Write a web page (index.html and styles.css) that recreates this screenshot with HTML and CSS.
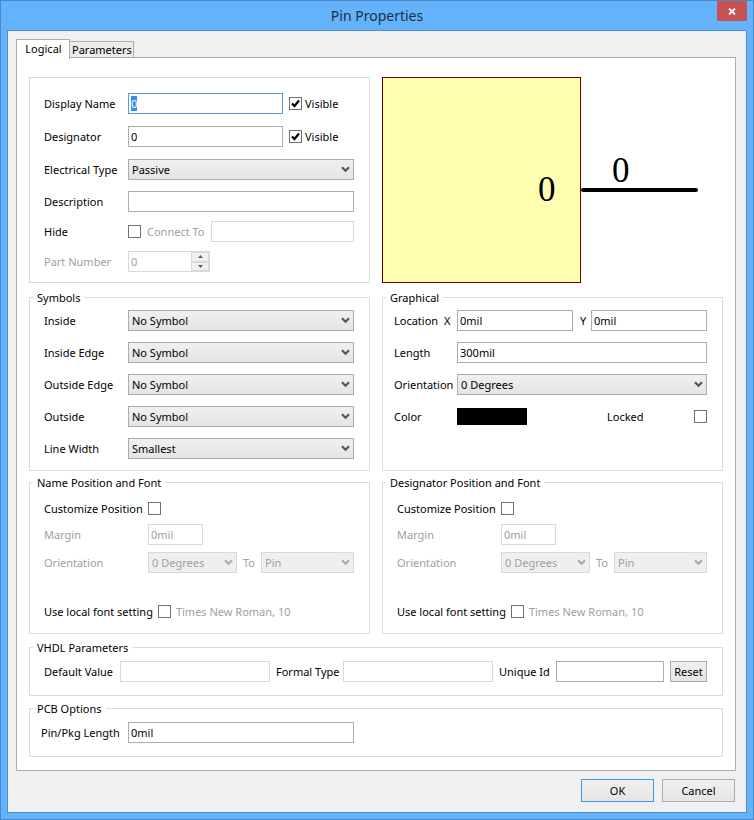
FILE: index.html
```html
<!DOCTYPE html>
<html lang="en">
<head>
    <meta charset="UTF-8">
    <meta name="viewport" content="width=device-width, initial-scale=1.0">
    <title>Pin Properties</title>
    <link rel="stylesheet" href="styles.css">
</head>
<body>
    <div class="window">
        <header class="titlebar">
            <h1>Pin Properties</h1>
            <button type="button" class="close" aria-label="Close">
                <svg width="8" height="7" viewBox="0 0 8 7"><path d="M1 0.5 L7 6.5 M7 0.5 L1 6.5" stroke="#fff" stroke-width="1.8"/></svg>
            </button>
        </header>

        <form class="client">
            <div class="tabs">
                <button type="button" class="tab active">Logical</button>
                <button type="button" class="tab">Parameters</button>
            </div>

            <div class="page">
                <div class="columns">
                    <div class="group main">
                        <div class="row loose">
                            <label class="name" for="displayName">Display Name</label>
                            <input type="text" class="current" id="displayName" value="0">
                            <label class="visible"><input type="checkbox" checked> Visible</label>
                        </div>
                        <div class="row loose">
                            <label class="name" for="designator">Designator</label>
                            <input type="text" id="designator" value="0">
                            <label class="visible"><input type="checkbox" checked> Visible</label>
                        </div>
                        <div class="row">
                            <label class="name" for="electricalType">Electrical Type</label>
                            <select id="electricalType"><option>Passive</option></select>
                        </div>
                        <div class="row tight">
                            <label class="name" for="description">Description</label>
                            <input type="text" id="description">
                        </div>
                        <div class="row tight">
                            <label class="name" for="hide">Hide</label>
                            <input type="checkbox" id="hide">
                            <label class="connect disabled" for="connectTo">Connect To</label>
                            <input type="text" id="connectTo" disabled>
                        </div>
                        <div class="row">
                            <label class="name disabled" for="partNumber">Part Number</label>
                            <div class="spinner">
                                <input type="text" id="partNumber" value="0" disabled>
                                <div class="arrows">
                                    <button type="button" aria-label="Up" disabled><svg width="5" height="3" viewBox="0 0 5 3"><path d="M0 3 L2.5 0 L5 3 Z"/></svg></button>
                                    <button type="button" aria-label="Down" disabled><svg width="5" height="3" viewBox="0 0 5 3"><path d="M0 0 L2.5 3 L5 0 Z"/></svg></button>
                                </div>
                            </div>
                        </div>
                    </div>

                    <!-- Pin preview -->
                    <svg class="preview" viewBox="0 0 341 206">
                        <rect x="0.5" y="0.5" width="198" height="205" fill="#ffffb0" stroke="#700000"/>
                        <path d="M201 113 H314" stroke="#000" stroke-width="4" stroke-linecap="round"/>
                        <text x="156" y="124">0</text>
                        <text x="230" y="105">0</text>
                    </svg>
                </div>

                <div class="columns">
                    <fieldset>
                        <legend>Symbols</legend>
                        <div class="row">
                            <label class="name" for="inside">Inside</label>
                            <select id="inside"><option>No Symbol</option></select>
                        </div>
                        <div class="row">
                            <label class="name" for="insideEdge">Inside Edge</label>
                            <select id="insideEdge"><option>No Symbol</option></select>
                        </div>
                        <div class="row">
                            <label class="name" for="outsideEdge">Outside Edge</label>
                            <select id="outsideEdge"><option>No Symbol</option></select>
                        </div>
                        <div class="row">
                            <label class="name" for="outside">Outside</label>
                            <select id="outside"><option>No Symbol</option></select>
                        </div>
                        <div class="row">
                            <label class="name" for="lineWidth">Line Width</label>
                            <select id="lineWidth"><option>Smallest</option></select>
                        </div>
                    </fieldset>

                    <fieldset class="graphical">
                        <legend>Graphical</legend>
                        <div class="row">
                            <span class="location">Location</span>
                            <label class="axis" for="locationX">X</label>
                            <input type="text" id="locationX" value="0mil">
                            <label class="axis y" for="locationY">Y</label>
                            <input type="text" id="locationY" value="0mil">
                        </div>
                        <div class="row">
                            <label class="name" for="length">Length</label>
                            <input type="text" id="length" value="300mil">
                        </div>
                        <div class="row">
                            <label class="name" for="orientation">Orientation</label>
                            <select id="orientation"><option>0 Degrees</option></select>
                        </div>
                        <div class="row">
                            <span class="name">Color</span>
                            <button type="button" class="color" aria-label="Color"></button>
                            <label class="locked">Locked <input type="checkbox"></label>
                        </div>
                    </fieldset>
                </div>

                <div class="columns fonts">
                    <fieldset>
                        <legend>Name Position and Font</legend>
                        <div class="row tight">
                            <label class="name" for="nameCustom">Customize Position</label>
                            <input type="checkbox" id="nameCustom">
                        </div>
                        <div class="row">
                            <label class="name disabled" for="nameMargin">Margin</label>
                            <input type="text" class="margin" id="nameMargin" value="0mil" disabled>
                        </div>
                        <div class="row orient">
                            <label class="name disabled" for="nameOrientation">Orientation</label>
                            <select id="nameOrientation" disabled><option>0 Degrees</option></select>
                            <label class="to disabled" for="nameTo">To</label>
                            <select id="nameTo" disabled><option>Pin</option></select>
                        </div>
                        <div class="row local">
                            <label for="nameFont">Use local font setting</label>
                            <input type="checkbox" id="nameFont">
                            <span class="disabled">Times New Roman, 10</span>
                        </div>
                    </fieldset>

                    <fieldset>
                        <legend>Designator Position and Font</legend>
                        <div class="row tight">
                            <label class="name" for="desCustom">Customize Position</label>
                            <input type="checkbox" id="desCustom">
                        </div>
                        <div class="row">
                            <label class="name disabled" for="desMargin">Margin</label>
                            <input type="text" class="margin" id="desMargin" value="0mil" disabled>
                        </div>
                        <div class="row orient">
                            <label class="name disabled" for="desOrientation">Orientation</label>
                            <select id="desOrientation" disabled><option>0 Degrees</option></select>
                            <label class="to disabled" for="desTo">To</label>
                            <select id="desTo" disabled><option>Pin</option></select>
                        </div>
                        <div class="row local">
                            <label for="desFont">Use local font setting</label>
                            <input type="checkbox" id="desFont">
                            <span class="disabled">Times New Roman, 10</span>
                        </div>
                    </fieldset>
                </div>

                <fieldset class="wide">
                    <legend>VHDL Parameters</legend>
                    <div class="vhdl">
                        <label for="defaultValue">Default Value</label>
                        <input type="text" id="defaultValue" disabled>
                        <label for="formalType">Formal Type</label>
                        <input type="text" id="formalType" disabled>
                        <label for="uniqueId">Unique Id</label>
                        <input type="text" id="uniqueId">
                        <button type="button" class="reset">Reset</button>
                    </div>
                </fieldset>

                <fieldset class="wide pcb">
                    <legend>PCB Options</legend>
                    <div class="row">
                        <label class="name" for="pinLength">Pin/Pkg Length</label>
                        <input type="text" id="pinLength" value="0mil">
                    </div>
                </fieldset>
            </div>

            <div class="footer">
                <button type="button" class="ok">OK</button>
                <button type="button">Cancel</button>
            </div>
        </form>
    </div>

    <script>
        document.getElementById("displayName").focus();
        document.getElementById("displayName").select();
    </script>
</body>
</html>
```
FILE: styles.css
```css
* {
    box-sizing: border-box;
}

body {
    margin: 0;
    font-family: "Noto Sans", "Open Sans", sans-serif;
    font-size: 11px;
    line-height: 15px;
    color: #000;
}

input,
select,
button {
    margin: 0;
    font: inherit;
    color: inherit;
    border-radius: 0;
}

/* Window frame */
.window {
    min-height: 100vh;
    display: flex;
    flex-direction: column;
    background: #63b2fb;
    border: 1px solid #4789c9;
    padding: 0 6px 6px;
}

.titlebar {
    display: grid;
    grid-template-columns: 30px 1fr 30px;
    height: 29px;
}

h1 {
    grid-column: 2;
    margin: 0;
    font-size: 14px;
    font-weight: normal;
    line-height: 29px;
    text-align: center;
    color: #1c2f42;
}

.close {
    height: 20px;
    padding: 0;
    border: none;
    background: #c75050;
    display: flex;
    align-items: center;
    justify-content: center;
}

.client {
    flex: 1;
    display: flex;
    flex-direction: column;
    padding: 8px 10px 10px 8px;
    background: #f0f0f0;
    border: 1px solid #4a90d2;
}

/* Tabs */
.tabs {
    display: flex;
    align-items: flex-end;
    height: 18px;
}

.tab {
    height: 16px;
    padding: 0 1px 1px 2px;
    border: 1px solid #acacac;
    border-left: none;
    border-bottom: none;
    background: #ececec;
    line-height: 15px;
}

.tab.active {
    position: relative;
    height: 20px;
    width: 54px;
    padding-bottom: 2px;
    margin-bottom: -2px;
    border-left: 1px solid #acacac;
    background: #fff;
}

.page {
    flex: 1;
    padding: 19px 12px 13px;
    background: #fff;
    border: 1px solid #acacac;
}

/* Groups */
.columns {
    display: grid;
    grid-template-columns: 1fr 1fr;
    gap: 12px;
    margin-bottom: 7px;
}

.group,
fieldset {
    min-width: 0;
    margin: 0;
    border: 1px solid #dcdcdc;
    padding: 0 15px 0 14px;
}

.group {
    padding-top: 15px;
}

fieldset {
    padding-top: 5px;
    padding-bottom: 11px;
}

legend {
    margin-left: -11px;
    padding: 0 4px;
}

.main .row:last-child {
    margin-bottom: 10px;
}

.columns + .columns {
    margin-bottom: 4px;
}

.preview {
    display: block;
    width: 100%;
}

.preview text {
    font-family: "Liberation Serif", serif;
    font-size: 35px;
}

/* Rows */
.row {
    display: flex;
    align-items: center;
    height: 21px;
    margin-bottom: 11px;
}

.row.loose {
    margin-bottom: 12px;
}

.row.tight {
    margin-bottom: 9px;
}

fieldset .row:last-child {
    margin-bottom: 0;
}

.name {
    flex: none;
    width: 84px;
    white-space: nowrap;
}

.disabled {
    color: #a0a0a0;
}

/* Controls */
input[type="text"],
select {
    flex: 1;
    min-width: 0;
    width: 100%;
    height: 21px;
    padding: 0 2px;
    border: 1px solid #abadb3;
    background: #fff;
    outline: none;
}

input[type="text"].current {
    border-color: #569de5;
}

input::selection {
    background: #3390ee;
    color: #fff;
}

select {
    appearance: none;
    padding: 0 18px 0 3px;
    border-color: #acacac;
    background: url("data:image/svg+xml,%3Csvg xmlns='http://www.w3.org/2000/svg' width='9' height='7'%3E%3Cpath d='M1 1.2 L4.5 4.7 L8 1.2' fill='none' stroke='%23555' stroke-width='2.2'/%3E%3C/svg%3E") no-repeat right 3px center, linear-gradient(#f0f0f0, #e4e4e4);
}

input[type="text"]:disabled {
    border-color: #d9d9d9;
    color: #a0a0a0;
}

select:disabled {
    opacity: 1;
    border-color: #d9d9d9;
    color: #a0a0a0;
    background: url("data:image/svg+xml,%3Csvg xmlns='http://www.w3.org/2000/svg' width='9' height='7'%3E%3Cpath d='M1 1.2 L4.5 4.7 L8 1.2' fill='none' stroke='%23aaa' stroke-width='2.2'/%3E%3C/svg%3E") no-repeat right 3px center, #efefef;
}

input[type="checkbox"] {
    appearance: none;
    flex: none;
    width: 13px;
    height: 13px;
    border: 1px solid #707070;
    background: #fff;
}

input[type="checkbox"]:checked {
    background: #fff url("data:image/svg+xml,%3Csvg xmlns='http://www.w3.org/2000/svg' width='11' height='11'%3E%3Cpath d='M2 5.5 L4.5 8 L9 2.5' fill='none' stroke='%23000' stroke-width='2.2'/%3E%3C/svg%3E");
}

.visible {
    display: flex;
    align-items: center;
    gap: 3px;
    flex: none;
    width: 65px;
    margin-left: 6px;
}

.connect {
    flex: none;
    width: 64px;
    margin-left: 6px;
}

.spinner {
    display: flex;
    width: 82px;
    height: 21px;
    border: 1px solid #d9d9d9;
}

.spinner input[type="text"] {
    height: 19px;
    border: none;
}

.arrows {
    display: flex;
    flex-direction: column;
    flex: none;
    width: 18px;
}

.arrows button {
    flex: 1;
    display: flex;
    align-items: center;
    justify-content: center;
    padding: 0;
    border: 1px solid #d9d9d9;
    background: #f0f0f0;
    fill: #606060;
}

/* Graphical */
.graphical {
    padding-left: 11px;
}

.graphical legend,
.pcb legend {
    margin-left: -8px;
}

.graphical .name {
    width: 63px;
}

.location {
    flex: none;
    width: 50px;
}

.axis {
    flex: none;
    width: 13px;
}

.axis.y {
    width: 11px;
    margin-left: 7px;
}

.color {
    width: 70px;
    height: 17px;
    padding: 0;
    border: none;
    background: #000;
}

.locked {
    flex: none;
    display: flex;
    align-items: center;
    justify-content: space-between;
    width: 100px;
    margin-left: auto;
}

/* Position and font */
.fonts fieldset {
    padding-top: 8px;
}

.fonts .row {
    margin-bottom: 7px;
}

.fonts .row.tight {
    margin-bottom: 5px;
}

.fonts .name {
    width: 104px;
}

.fonts .margin {
    flex: none;
    width: 55px;
}

.fonts .orient {
    display: grid;
    grid-template-columns: 104px 89fr 24px 93fr;
}

.to {
    padding-left: 6px;
}

.fonts .local {
    gap: 5px;
    margin-top: 28px;
}

.columns.fonts {
    margin-bottom: 6px;
}

/* Full width groups */
.wide {
    padding-top: 6px;
    padding-bottom: 13px;
}

.wide + .wide {
    margin-top: 5px;
}

.vhdl {
    display: grid;
    grid-template-columns: 70px 150fr 61px 150fr 51px 108fr 37px;
    gap: 6px;
    align-items: center;
    white-space: nowrap;
}

.pcb {
    padding-left: 11px;
}

.pcb .row {
    width: calc(50% - 20px);
}

.pcb .name {
    width: 87px;
}

.reset {
    height: 21px;
    padding: 0;
    border: 1px solid #acacac;
    background: linear-gradient(#f0f0f0, #e5e5e5);
}

.footer {
    display: flex;
    justify-content: flex-end;
    gap: 8px;
    margin-top: 8px;
    padding-right: 1px;
}

.footer button {
    width: 73px;
    height: 23px;
    padding: 0;
    border: 1px solid #acacac;
    background: linear-gradient(#f0f0f0, #e5e5e5);
}

.footer .ok {
    border-color: #3c97ea;
}
```
